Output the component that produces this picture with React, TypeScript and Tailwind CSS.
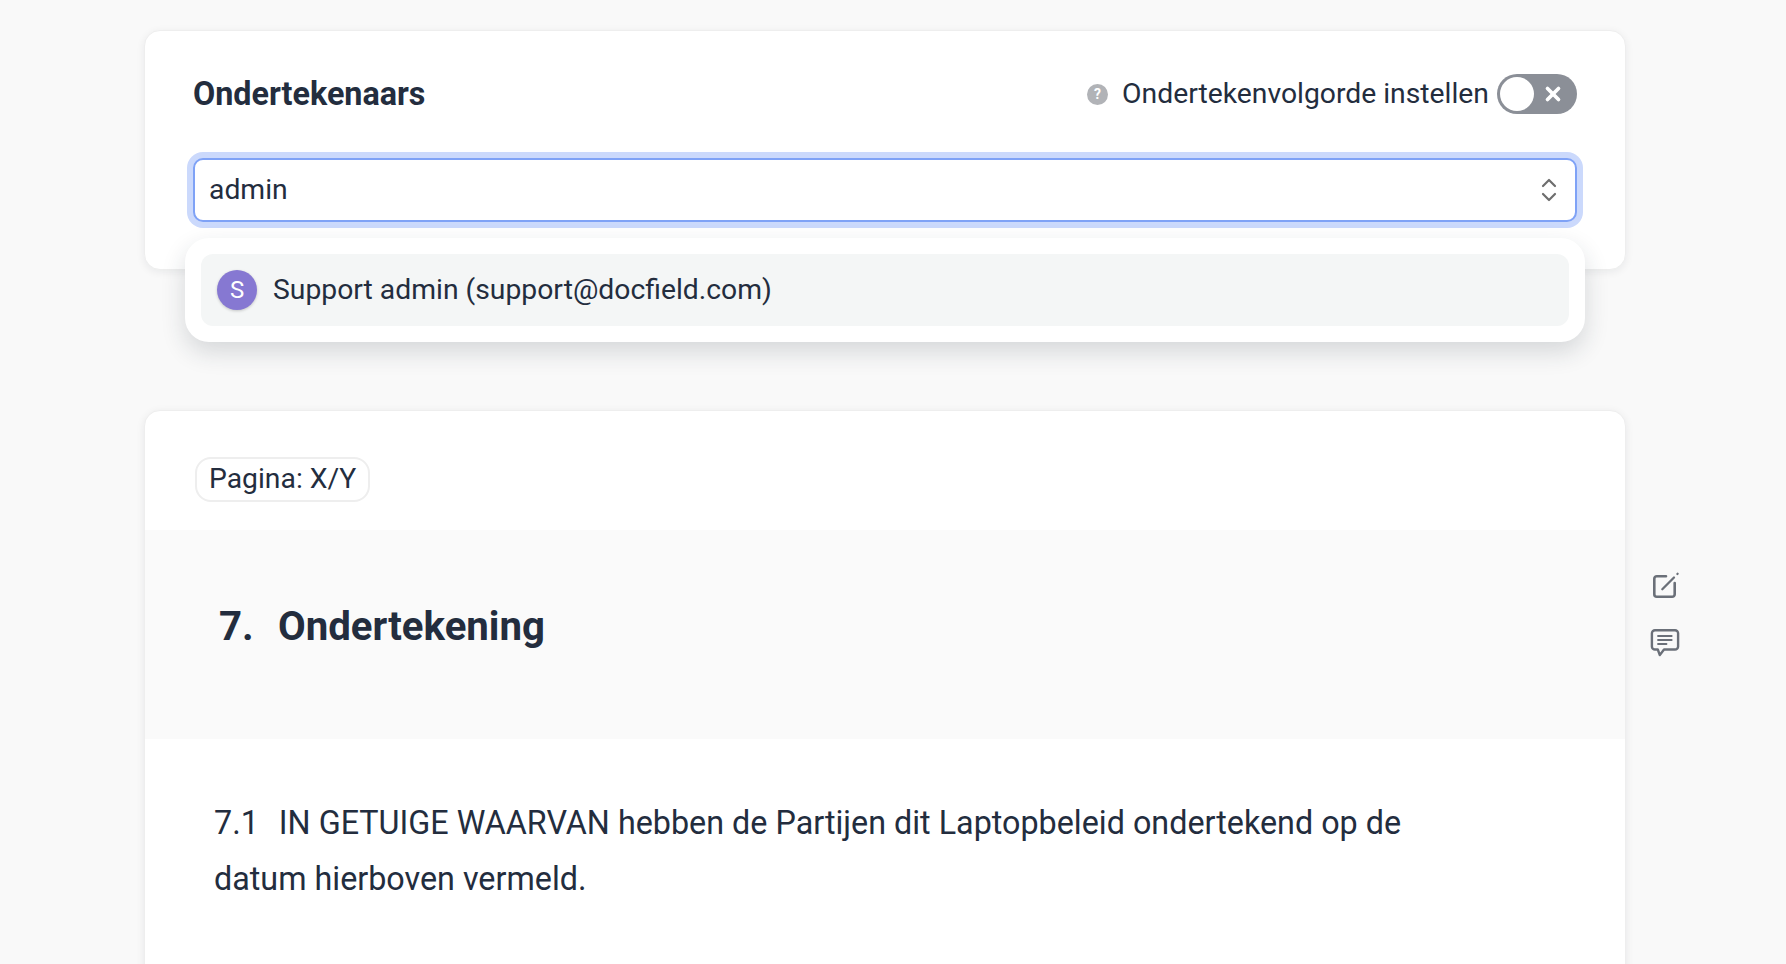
import { X, ChevronUp, ChevronDown } from "lucide-react";

function EditIcon() {
  return (
    <svg width="28" height="28" viewBox="0 0 28 28" fill="none" stroke="#6b7079" strokeLinecap="round" strokeLinejoin="round">
      <path strokeWidth="2.6" d="M14 4.3H4.8a2.5 2.5 0 0 0-2.5 2.5V22.2a2.5 2.5 0 0 0 2.5 2.5H20.2a2.5 2.5 0 0 0 2.5-2.5V11" />
      <path strokeWidth="2.3" d="M10.3 17.3 22 5.5" />
      <path strokeWidth="2.3" d="M25.4 2 25.6 1.8" />
    </svg>
  );
}

function CommentIcon() {
  return (
    <svg width="30" height="30" viewBox="0 0 30 30" fill="none" stroke="#6b7079" strokeLinecap="round" strokeLinejoin="round">
      <path strokeWidth="2.4" d="M5 2.2h20a3.1 3.1 0 0 1 3.1 3.1v13.1a3.1 3.1 0 0 1-3.1 3.1H14l-4.2 5.6-2-5.6H5a3.1 3.1 0 0 1-3.1-3.1V5.3A3.1 3.1 0 0 1 5 2.2Z" />
      <path strokeWidth="1.8" d="M8 8h13.7M8 12h13.7M8 16h8.5" />
    </svg>
  );
}

export default function App() {
  return (
    <div className="h-[964px] overflow-hidden bg-[#f9f9f9] pl-[144px] pt-[30px] font-['Roboto',sans-serif] text-[#232d3e]">
      {/* signers card */}
      <div className="h-[240px] w-[1482px] rounded-2xl border border-[#eeeeee] bg-white px-[48px] pt-[31px] shadow-[0_2px_8px_rgba(15,23,42,0.07)]">
        <div className="flex h-[64px] items-center justify-between">
          <h2 className="text-[32.3px] font-bold">Ondertekenaars</h2>
          <div className="flex items-center">
            <span className="flex h-[21px] w-[21px] items-center justify-center rounded-full bg-[#b1b3b7] text-[14px] font-bold text-white">?</span>
            <span className="ml-[14px] text-[28.3px]">Ondertekenvolgorde instellen</span>
            <div className="ml-[8px] flex h-[40px] w-[80px] items-center rounded-full bg-[#8b8f97] pl-[3px]">
              <div className="h-[34px] w-[34px] rounded-full bg-white" />
              <X size={22} strokeWidth={4} className="ml-[8px] text-white" />
            </div>
          </div>
        </div>

        <div className="relative mt-[32px]">
          <div className="flex h-[64px] items-center justify-between rounded-[10px] border-2 border-[#7fa2f6] bg-white pl-[14px] pr-[14px] shadow-[0_0_0_6px_#cbd9fc]">
            <span className="text-[28.3px]">admin</span>
            <div className="flex flex-col items-center text-[#6e6e6e]">
              <ChevronUp size={24} strokeWidth={2.2} className="-mb-[5px]" />
              <ChevronDown size={24} strokeWidth={2.2} className="-mt-[5px]" />
            </div>
          </div>

          <div className="absolute -left-[8px] -right-[8px] top-[80px] rounded-[24px] bg-white p-[16px] shadow-[0_10px_24px_rgba(30,41,59,0.16)]">
            <div className="flex h-[72px] items-center rounded-[12px] bg-[#f4f6f6] px-[16px]">
              <div className="flex h-[40px] w-[40px] items-center justify-center rounded-full bg-[#8678d2] text-[24px] text-white shadow-[0_1px_3px_rgba(0,0,0,0.2)]">S</div>
              <span className="ml-[16px] text-[28.3px]">Support admin (support@docfield.com)</span>
            </div>
          </div>
        </div>
      </div>

      {/* document card */}
      <div className="relative mt-[140px] h-[600px] w-[1482px] rounded-t-2xl border border-[#eeeeee] bg-white shadow-[0_2px_8px_rgba(15,23,42,0.08)]">
        <div className="h-[119px] pl-[50px] pt-[46px]">
          <span className="inline-flex h-[45px] items-center rounded-[16px] border-2 border-[#eeeeee] px-[12px] text-[28.3px]">Pagina: X/Y</span>
        </div>

        <div className="flex h-[209px] items-center bg-[#fafafa] pl-[74px] pb-[14px] text-[40.2px] font-bold">
          <span className="w-[59px]">7.</span>
          <span>Ondertekening</span>
        </div>

        <div className="pl-[69px] pt-[56px] text-[32.3px] leading-[56px]">
          <p>
            <span className="mr-[20px]">7.1</span>
            <span>IN GETUIGE WAARVAN hebben de Partijen dit Laptopbeleid ondertekend op de</span>
          </p>
          <p>datum hierboven vermeld.</p>
        </div>

        <div className="absolute left-full top-[161px] ml-[25px] flex flex-col items-end gap-[28px]">
          <EditIcon />
          <CommentIcon />
        </div>
      </div>
    </div>
  );
}
